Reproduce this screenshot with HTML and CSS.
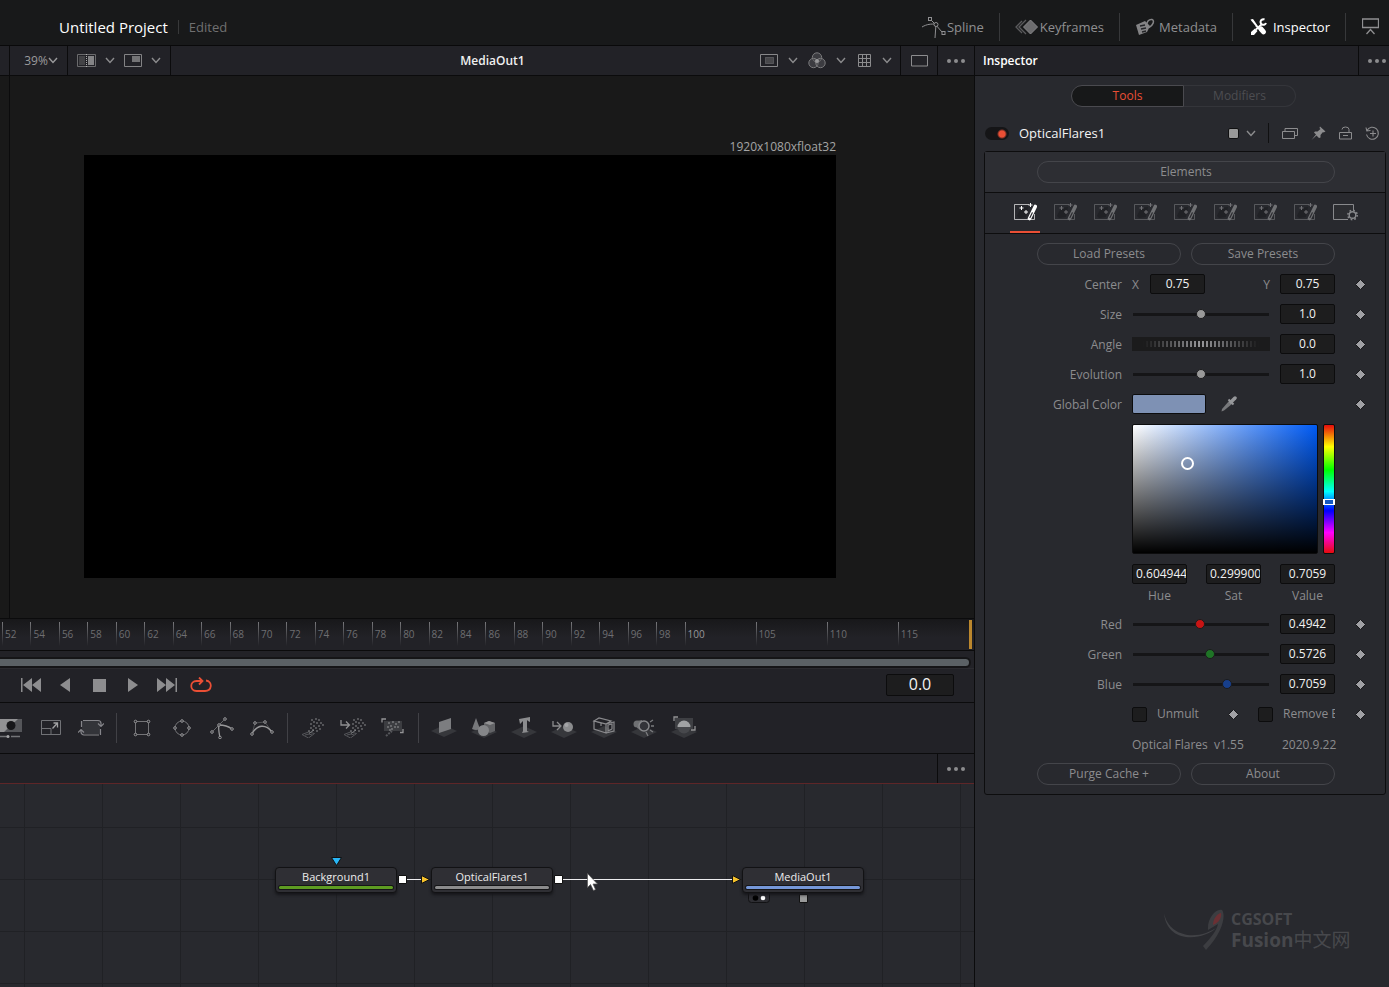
FILE: index.html
```html
<!DOCTYPE html>
<html lang="en">
<head>
<meta charset="utf-8">
<title>Untitled Project</title>
<link rel="stylesheet" href="styles.css">
</head>
<body>
<svg class="defs" aria-hidden="true">
  <symbol id="chev" viewBox="0 0 10 7"><path d="M1 1l4 4.500L9 1" fill="none" stroke="currentColor" stroke-width="1.400"/></symbol>
  <symbol id="dots" viewBox="0 0 18 4"><g fill="currentColor"><circle cx="2" cy="2" r="2"/><circle cx="9" cy="2" r="2"/><circle cx="16" cy="2" r="2"/></g></symbol>
  <symbol id="dia" viewBox="0 0 11 11"><path d="M5.500.500 10.500 5.500 5.500 10.500.500 5.500z" fill="#a0a0a4" stroke="#17171a" stroke-width="1"/></symbol>
  <symbol id="wand" viewBox="0 0 24 20">
    <path d="M16 2.500H1.500v15h20V12" fill="none" stroke="currentColor" stroke-width="1" opacity=".65"/>
    <path d="M4 14c2-6 6-9 11-9l-2 10-7 1z" fill="#202125"/>
    <path d="M8.500 4v4M6.500 6h4M13 8v4M11 10h4M17.500 1v4M15.500 3h4" stroke="currentColor" stroke-width="1"/>
    <path d="M22.300 4.500 16.500 16.500" stroke="currentColor" stroke-width="3.600" stroke-linecap="round"/>
    <path d="M19.300 10.800 17 15.500" stroke="#2b2b30" stroke-width="1.200" stroke-linecap="round"/>
  </symbol>
  <symbol id="plane" viewBox="0 0 28 14"><path d="M14 1 27 7 14 13 1 7z" fill="#36373b"/></symbol>
  <symbol id="spray" viewBox="0 0 22 20">
    <path d="M0 16.500 6.500 14l6 1.500L6.500 20zM3 17l4-1 3 1" fill="none" stroke="#55565a" stroke-width="1"/>
    <path d="M7 15.500 12 12" stroke="#77787b"/>
    <path d="M10 2v0M14 1v0M12 4v0M17 2v0M9 6v0M15 5v0M19 5v0M12 8v0M17 8v0M21 7v0M9 10v0M14 10v0M18 11v0M11 12v0M15 13v0M7 13v0" stroke="#999a9c" stroke-width="1.600" stroke-linecap="round"/>
  </symbol>
</svg>

<header class="topbar">
  <h1 class="project">Untitled Project</h1>
  <span class="edited">Edited</span>
  <nav class="topnav">
    <button class="nav">
      <svg width="25" height="22" viewBox="0 0 25 22"><g fill="none" stroke="currentColor"><path d="M0 11c5-3 9-3 14-3 0 5-1 9-1 14M9 4l4 4 7 8"/><rect x="6.500" y="1.500" width="3" height="3"/><circle cx="14" cy="8.500" r="2" fill="#18191a"/><rect x="20" y="15.500" width="3" height="3"/></g></svg><span>Spline</span></button>
    <button class="nav">
      <svg width="25" height="16" viewBox="0 0 25 16"><path d="M7 2 1 8l6 6M11 1 4 8l7 7" fill="none" stroke="#5b5b5d" stroke-width="1.300"/><path d="M15.500 1 22.500 8l-7 7-7-7z" fill="#6c6c6e" stroke="#89898b"/></svg><span>Keyframes</span></button>
    <button class="nav">
      <svg width="24" height="18" viewBox="0 0 24 18"><path d="M1 7 10 3l5 5-3 6-8 3z" fill="#848486"/><path d="M5 8l5-1M6 11l5-1M7 14l4-1" stroke="#242528" stroke-width="1.300"/><path d="M12 8c-1-4 2-7 5-6.500 3 1 1 6-3 8" fill="none" stroke="#848486" stroke-width="1.500"/></svg><span>Metadata</span></button>
    <button class="nav active">
      <svg width="23" height="18" viewBox="0 0 23 18"><path d="M.500 1.500 3 1l4.500 6.500-1.500 1L1.500 3zM1 17v-3l4-3.500 2.500 2.500L4 17z" fill="#fff"/><path d="M11 11l2.500 2.800" stroke="#fff" stroke-width="5" stroke-linecap="round"/><path d="M6 11.500 12 6M6 7.500l4 4" stroke="#fff" stroke-width="1.800"/><path d="M14.500 1.500a2.800 2.800 0 1 0 1.500 3.500" fill="none" stroke="#fff" stroke-width="2"/></svg><span>Inspector</span></button>
    <button class="nav last" aria-label="Display">
      <svg width="17" height="17" viewBox="0 0 17 17"><path d="M.500 1h16v8.500H.500zM4.500 16l4-4.500 4 4.500" fill="none" stroke="currentColor" stroke-width="1.300"/></svg></button>
  </nav>
</header>

<div class="workspace">
  <main class="main">
    <div class="viewbar">
      <div class="cell edge"></div>
      <button class="cell zoom">39%<svg width="10" height="7"><use href="#chev"/></svg></button>
      <div class="cell views">
        <button aria-label="Split view"><svg width="19" height="14" viewBox="0 0 19 14"><path d="M.500.500h18v12H.500z" fill="none" stroke="#6b6b6d"/><path d="M2 2h6v9H2z" fill="#434346"/><path d="M11 2h6v9h-6z" fill="#858587"/><path d="M9.500 0v14" stroke="#b0b0b0" stroke-dasharray="1 1"/></svg></button>
        <svg width="10" height="7"><use href="#chev"/></svg>
        <button aria-label="Sub view"><svg width="18" height="13" viewBox="0 0 18 13"><path d="M.500.500h17v12H.500z" fill="none" stroke="#838385"/><path d="M8 2h8v6H8z" fill="#747476"/></svg></button>
        <svg width="10" height="7"><use href="#chev"/></svg>
      </div>
      <h2 class="viewtitle">MediaOut1</h2>
      <div class="cell viewopts">
        <button aria-label="Region"><svg width="18" height="13" viewBox="0 0 18 13"><path d="M.500.500h17v12H.500z" fill="none" stroke="#88888a"/><path d="M5.500 3.500h8v6h-8z" fill="#48484b" stroke="#77777a" stroke-dasharray="1 1"/></svg></button>
        <svg width="10" height="7"><use href="#chev"/></svg>
        <button aria-label="Channels"><svg width="18" height="17" viewBox="0 0 18 17"><g fill="#55555888" stroke="#7b7b7d"><circle cx="9" cy="5.500" r="4.700"/><circle cx="5.500" cy="11" r="4.700"/><circle cx="12.500" cy="11" r="4.700"/></g><circle cx="9" cy="9" r="2" fill="#99999b"/></svg></button>
        <svg width="10" height="7"><use href="#chev"/></svg>
        <button aria-label="Grid"><svg width="13" height="13" viewBox="0 0 13 13"><path d="M.500.500h12v12H.500zM4.500 0v13M8.500 0v13M0 4.500h13M0 8.500h13" fill="none" stroke="#8b8b8d"/></svg></button>
        <svg width="10" height="7"><use href="#chev"/></svg>
      </div>
      <button class="cell single" aria-label="Single view"><svg width="17" height="12" viewBox="0 0 17 12"><path d="M.500.500h16v10.500H.500z" fill="none" stroke="currentColor"/></svg></button>
      <button class="cell more" aria-label="More"><svg width="18" height="4"><use href="#dots"/></svg></button>
    </div>

    <section class="viewer">
      <div class="stage">
        <p class="res">1920x1080xfloat32</p>
        <div class="frame"></div>
      </div>
    </section>

    <div class="ruler">
      <span>52</span><span>54</span><span>56</span><span>58</span><span>60</span><span>62</span><span>64</span><span>66</span><span>68</span><span>70</span><span>72</span><span>74</span><span>76</span><span>78</span><span>80</span><span>82</span><span>84</span><span>86</span><span>88</span><span>90</span><span>92</span><span>94</span><span>96</span><span>98</span><span class="five major">100</span><span class="five">105</span><span class="five">110</span><span class="five">115</span>
      <i class="endmark"></i>
    </div>
    <div class="range"><div class="rangebar"></div></div>

    <div class="transport">
      <button class="first" aria-label="First frame"><svg width="20" height="14" viewBox="0 0 20 14"><path d="M0 0h1.500v14H0zM11 0v14L2 7zM20 0v14l-9-7z"/></svg></button>
      <button class="rev" aria-label="Play reverse"><svg width="10" height="14" viewBox="0 0 10 14"><path d="M10 0v14L0 7z"/></svg></button>
      <button class="stop" aria-label="Stop"><svg width="13" height="13" viewBox="0 0 13 13"><path d="M0 0h13v13H0z"/></svg></button>
      <button class="play" aria-label="Play"><svg width="10" height="14" viewBox="0 0 10 14"><path d="M0 0v14l10-7z"/></svg></button>
      <button class="lastf" aria-label="Last frame"><svg width="20" height="14" viewBox="0 0 20 14"><path d="M18.500 0H20v14h-1.500zM9 0v14l9-7zM0 0v14l9-7z"/></svg></button>
      <button class="loop" aria-label="Loop"><svg width="22" height="16" viewBox="0 0 22 16"><path d="M16 3.500c7 1 6 10.500-1 10.500H6.500C-.500 14-.500 4 6.500 4H12M9 .500 12.500 4 9 7.500" fill="none" stroke="#ea4f35" stroke-width="1.800"/></svg></button>
      <input class="field time" type="text" value="0.0" aria-label="Current time">
    </div>

    <div class="tools">
      <button aria-label="Background"><svg width="22" height="20" viewBox="0 0 22 20"><path d="M0 1h22v13H0z" fill="#55565a"/><path d="M0 1h18L4 14H0z" fill="#929294"/><circle cx="11" cy="7.500" r="4.500" fill="#17171a"/><path d="M0 18.500h9M11 18.500h9" stroke="#737477" stroke-width="1.500"/><circle cx="8" cy="18.500" r="1.500" fill="#a5a5a7"/></svg></button>
      <button aria-label="Resize"><svg width="20" height="20" viewBox="0 0 20 20"><path d="M.500 2.500h19v14H.500zM.500 10.500H10v6H.500z" fill="none" stroke="#717276"/><path d="M11.500 10.500 16.500 5M12.500 5h4v4.500" fill="none" stroke="#a1a1a3" stroke-width="1.300"/></svg></button>
      <button aria-label="Transform"><svg width="26" height="20" viewBox="0 0 26 20"><path d="M4 3h18v13H4z" fill="#333439"/><path d="M5 2.500h15a3 3 0 0 1 3 3V8M20 5.500 23 8.500l3-3M21 17H6a3 3 0 0 1-3-3v-2M0 14.500l3-3 3 3M3.500 9V3M22.500 11v6" fill="none" stroke="#85858a" stroke-width="1.200"/></svg></button>
      <i class="sep"></i>
      <button aria-label="Rectangle mask"><svg width="18" height="18" viewBox="0 0 18 18"><g fill="#222227" stroke="#98989a"><path d="M2.500 2.500h13v13h-13z" stroke="#747477"/><circle cx="2.500" cy="2.500" r="1.300"/><circle cx="15.500" cy="2.500" r="1.300"/><circle cx="2.500" cy="15.500" r="1.300"/><circle cx="15.500" cy="15.500" r="1.300"/></g></svg></button>
      <button aria-label="Ellipse mask"><svg width="18" height="18" viewBox="0 0 18 18"><g fill="#222227" stroke="#98989a"><circle cx="9" cy="9" r="7" stroke="#747477"/><circle cx="9" cy="2" r="1.300"/><circle cx="16" cy="9" r="1.300"/><circle cx="2" cy="9" r="1.300"/><circle cx="9" cy="16" r="1.300"/></g></svg></button>
      <button aria-label="Polygon mask"><svg width="24" height="22" viewBox="0 0 24 22"><g fill="#222227" stroke="#98989a"><path d="M2 15 15 2" stroke="#66676a"/><path d="M10 21C9 15 8 11 9 8c5 0 9 1 13 4" fill="none" stroke-width="1.300"/><circle cx="15" cy="2" r="1.300"/><circle cx="2" cy="15" r="1.300"/><circle cx="9" cy="8" r="1.300"/><circle cx="22" cy="12" r="1.300"/><circle cx="10" cy="20.500" r="1.300"/></g></svg></button>
      <button aria-label="B-spline mask"><svg width="24" height="16" viewBox="0 0 24 16"><g fill="#222227" stroke="#98989a"><path d="M2 14 5 3l10-1 7 10" fill="none" stroke="#505154"/><path d="M2 14c5-10 14-10 20-2" fill="none" stroke-width="1.500"/><circle cx="2" cy="14" r="1.300"/><circle cx="5" cy="3" r="1.300"/><circle cx="15" cy="2" r="1.300"/><circle cx="22" cy="12" r="1.300"/></g></svg></button>
      <i class="sep"></i>
      <button aria-label="Particle emitter"><svg width="22" height="20"><use href="#spray"/></svg></button>
      <button aria-label="Particle merge"><svg width="26" height="20" viewBox="0 0 26 20"><path d="M1 2v5h8M6 3.500 9.500 7 6 10.500" fill="none" stroke="#8f8f91" stroke-width="1.300"/><use href="#spray" x="4" width="22" height="20"/></svg></button>
      <button aria-label="Particle render"><svg width="24" height="20" viewBox="0 0 24 20"><path d="M3 3h18v10H3z" fill="#3c3d41"/><path d="M1 4.500V1h4M19 14.500h3V11" fill="none" stroke="#949496" stroke-width="1.300"/><path d="M8 5v0M12 4v0M15 6v0M10 8v0M18 4v0M14 9v0M17 9v0M7 9v0M11 11v0M9 12v0" stroke="#a5a5a7" stroke-width="1.600" stroke-linecap="round"/><path d="M5 18 11 13" stroke="#55565a" stroke-dasharray="2 1" stroke-width="2"/></svg></button>
      <i class="sep"></i>
      <button aria-label="Image plane"><svg width="28" height="24" viewBox="0 0 28 24"><use href="#plane" y="8" width="28" height="14"/><path d="M9 6 21 2v11L9 17z" fill="#7c7d80"/></svg></button>
      <button aria-label="Shape 3D"><svg width="28" height="24" viewBox="0 0 28 24"><use href="#plane" y="9" width="28" height="14"/><path d="M6 2 2 13q4 2 8 0z" fill="#77787b"/><path d="m14 7 5-2 6 2v8l-5 2-6-3z" fill="#626366"/><path d="m14 7 5-2 6 2-5 2z" fill="#929294"/><circle cx="13.500" cy="14.500" r="5.500" fill="#858689"/></svg></button>
      <button aria-label="Text 3D"><svg width="28" height="24" viewBox="0 0 28 24"><use href="#plane" y="9" width="28" height="14"/><path d="m9 3 11-2v5l-2-1-1-1v11l2 1-7 1 1-2V5l-3 3z" fill="#8b8c8e"/></svg></button>
      <button aria-label="Merge 3D"><svg width="28" height="24" viewBox="0 0 28 24"><use href="#plane" y="9" width="28" height="14"/><path d="M3 5v5h8M7 6l4 4-4 4" fill="none" stroke="#8b8b8d" stroke-width="1.300"/><circle cx="18" cy="11" r="5" fill="#8b8c8e"/><circle cx="16.500" cy="9" r="2" fill="#a4a5a7"/></svg></button>
      <button aria-label="Camera 3D"><svg width="28" height="24" viewBox="0 0 28 24"><use href="#plane" y="9" width="28" height="14"/><path d="M4 5 9 2l12 3-5 3zM4 5v8l12 4V8zM16 8l8-2v9l-8 2M18 9l4-1v5l-4 2zM7 6l4 1v3" fill="none" stroke="#8a8a8d" stroke-width="1.200"/></svg></button>
      <button aria-label="Spot light"><svg width="28" height="24" viewBox="0 0 28 24"><use href="#plane" y="9" width="28" height="14"/><circle cx="7" cy="8" r="3.500" fill="#6f7073"/><path d="m7 5 5-1v11l-5-3z" fill="#6f7073"/><circle cx="14" cy="10" r="5" fill="#333439" stroke="#87888b" stroke-width="1.500"/><path d="m20 6 3-2M21 10h3M20 14l3 2M16 16l2 4" stroke="#7b7c7f" stroke-width="1.300"/></svg></button>
      <button aria-label="Renderer 3D"><svg width="28" height="24" viewBox="0 0 28 24"><use href="#plane" y="9" width="28" height="14"/><path d="M5 2h18v11H5z" fill="#3e3f43"/><path d="M4 5V1h4M21 14h4v-4" fill="none" stroke="#929294" stroke-width="1.300"/><circle cx="14" cy="11" r="6.500" fill="#47484c"/><path d="M7.500 11a6.500 6.500 0 0 1 13 0z" fill="#a1a2a4"/></svg></button>
    </div>

    <div class="flowbar"><button class="cell more" aria-label="Flow options"><svg width="18" height="4"><use href="#dots"/></svg></button></div>

    <section class="flow">
      <svg class="wires" width="900" height="140" viewBox="0 0 900 140">
        <path d="M405 95.500h18M561 95.500h174" stroke="#ededef" stroke-width="1"/>
        <path d="m421.500 91.500 8 4-8 4zM732.500 91.500l8 4-8 4z" fill="#f5c12b" stroke="#111"/>
        <path d="M398.500 91.500h8v8h-8zM554.500 91.500h8v8h-8z" fill="#fff" stroke="#111"/>
        <path d="M331.500 73.500h10l-5 8z" fill="#29b6f6" stroke="#111"/>
        <path d="M799.500 110.500h8v8h-8z" fill="#999a9a" stroke="#111"/>
        <rect x="748.500" y="106.500" width="21" height="12" rx="3" fill="#2e2e33" stroke="#121214"/>
        <circle cx="755.500" cy="114" r="2.800" fill="#000"/><circle cx="763" cy="114" r="2.300" fill="#fff"/>
      </svg>
      <div class="node n1">Background1</div>
      <div class="node n2">OpticalFlares1</div>
      <div class="node n3">MediaOut1</div>
      <svg class="cursor" width="12" height="19" viewBox="0 0 12 19"><path d="M.500.500v14l3-3 3 6 2-1-2.500-5.500h4.500z" fill="#fff" stroke="#555" stroke-width=".7"/></svg>
    </section>
  </main>

  <aside class="inspector">
    <div class="insphead"><h2>Inspector</h2><button class="cell dotsbtn" aria-label="Inspector options"><svg width="18" height="4"><use href="#dots"/></svg></button></div>

    <div class="segwrap"><div class="seg"><button class="on">Tools</button><button>Modifiers</button></div></div>

    <div class="toolhead">
      <label class="toggle"><input type="checkbox" checked aria-label="Enable OpticalFlares1"></label>
      <h3>OpticalFlares1</h3>
      <button class="chip" aria-label="Node color"></button>
      <svg class="chipchev" width="10" height="7"><use href="#chev"/></svg>
      <i class="vsep"></i>
      <button aria-label="Versions"><svg width="16" height="13" viewBox="0 0 16 13"><path d="M.500 4.500h12v7H.500zM3 4V1.500h12.500v7H13" fill="none" stroke="currentColor"/></svg></button>
      <button aria-label="Pin"><svg width="15" height="15" viewBox="0 0 15 15"><path d="m9 .500 5.500 5-2 1-.500-.500-2.500 3v2.500L8 12 5.500 9.500.500 14 5 8.500 3 6.500l1-1h2.500l3-2.500-1-1z" fill="currentColor"/></svg></button>
      <button aria-label="Lock"><svg width="13" height="14" viewBox="0 0 13 14"><path d="M.500 6.500h12v6.500H.500zM3 3.500a3.500 2.500 0 0 1 7 0v3M4 9.500h5" fill="none" stroke="currentColor"/></svg></button>
      <button aria-label="Reset"><svg width="15" height="15" viewBox="0 0 15 15"><path d="M2 4.500a6 6 0 1 1-.500 4M1 1.500l.800 3.500 3.700-.500M8 4.500v6M5 7.500h6" fill="none" stroke="currentColor" stroke-width="1.100"/></svg></button>
    </div>

    <section class="panel">
      <div class="elements"><button class="pill">Elements</button></div>
      <div class="tabs">
        <button class="on" aria-label="Controls 1"><svg width="24" height="20"><use href="#wand"/></svg></button>
        <button aria-label="Controls 2"><svg width="24" height="20"><use href="#wand"/></svg></button>
        <button aria-label="Controls 3"><svg width="24" height="20"><use href="#wand"/></svg></button>
        <button aria-label="Controls 4"><svg width="24" height="20"><use href="#wand"/></svg></button>
        <button aria-label="Controls 5"><svg width="24" height="20"><use href="#wand"/></svg></button>
        <button aria-label="Controls 6"><svg width="24" height="20"><use href="#wand"/></svg></button>
        <button aria-label="Controls 7"><svg width="24" height="20"><use href="#wand"/></svg></button>
        <button aria-label="Controls 8"><svg width="24" height="20"><use href="#wand"/></svg></button>
        <button aria-label="Settings"><svg width="25" height="17" viewBox="0 0 25 17"><path d="M20.500 6V.500H.500v15H15" fill="#2c2d31" stroke="#88898c"/><circle cx="19.500" cy="11" r="3.300" fill="#28292e" stroke="#88898c" stroke-width="1.400"/><circle cx="19.500" cy="11" r="4.700" fill="none" stroke="#88898c" stroke-width="1.500" stroke-dasharray="1.700 2"/></svg></button>
      </div>

      <div class="controls">
        <div class="pair"><button class="pill">Load Presets</button><button class="pill">Save Presets</button></div>

        <div class="row"><span class="lab">Center</span>
          <div class="xy"><label for="cx">X</label><input id="cx" class="field" type="text" value="0.75"><label class="y" for="cy">Y</label></div>
          <input id="cy" class="field" type="text" value="0.75"><button class="key" aria-label="Keyframe Center"><svg width="11" height="11"><use href="#dia"/></svg></button></div>
        <div class="row"><label class="lab" for="size">Size</label><input id="size" class="slider" type="range" min="0" max="2" step="0.01" value="1">
          <input class="field" type="text" value="1.0" aria-label="Size value"><button class="key" aria-label="Keyframe Size"><svg width="11" height="11"><use href="#dia"/></svg></button></div>
        <div class="row"><label class="lab" for="angle">Angle</label><div class="wheel"></div>
          <input id="angle" class="field" type="text" value="0.0"><button class="key" aria-label="Keyframe Angle"><svg width="11" height="11"><use href="#dia"/></svg></button></div>
        <div class="row"><label class="lab" for="evo">Evolution</label><input id="evo" class="slider" type="range" min="0" max="2" step="0.01" value="1">
          <input class="field" type="text" value="1.0" aria-label="Evolution value"><button class="key" aria-label="Keyframe Evolution"><svg width="11" height="11"><use href="#dia"/></svg></button></div>
        <div class="row"><span class="lab">Global Color</span>
          <div class="colorctl"><button class="color" aria-label="Global Color"></button><button aria-label="Pick color"><svg width="16" height="16" viewBox="0 0 16 16"><path d="m.500 15.500.500-2.500 7-8 3 3-8 6.500z" fill="#77787b"/><path d="m7.500 3.500 5 5" stroke="#96979a" stroke-width="2"/><path d="m10 6 4-4" stroke="#96979a" stroke-width="3.500" stroke-linecap="round"/></svg></button></div>
          <span></span><button class="key" aria-label="Keyframe Global Color"><svg width="11" height="11"><use href="#dia"/></svg></button></div>

        <div class="picker">
          <div class="sv"><i class="ring"></i></div>
          <div class="hue"><i class="huemark"></i></div>
        </div>
        <div class="hsv">
          <input id="h" class="field long" type="text" value="0.604944"><input id="s" class="field long" type="text" value="0.299900"><input id="v" class="field" type="text" value="0.7059">
          <label for="h">Hue</label><label for="s">Sat</label><label for="v">Value</label>
        </div>

        <div class="row"><label class="lab" for="r">Red</label><input id="r" class="slider red" type="range" min="0" max="1" step="0.0001" value="0.4942">
          <input class="field" type="text" value="0.4942" aria-label="Red value"><button class="key" aria-label="Keyframe Red"><svg width="11" height="11"><use href="#dia"/></svg></button></div>
        <div class="row"><label class="lab" for="g">Green</label><input id="g" class="slider green" type="range" min="0" max="1" step="0.0001" value="0.5726">
          <input class="field" type="text" value="0.5726" aria-label="Green value"><button class="key" aria-label="Keyframe Green"><svg width="11" height="11"><use href="#dia"/></svg></button></div>
        <div class="row"><label class="lab" for="b">Blue</label><input id="b" class="slider blue" type="range" min="0" max="1" step="0.0001" value="0.7059">
          <input class="field" type="text" value="0.7059" aria-label="Blue value"><button class="key" aria-label="Keyframe Blue"><svg width="11" height="11"><use href="#dia"/></svg></button></div>

        <div class="row">
          <div class="checks">
            <input id="um" class="box" type="checkbox"><label class="um" for="um">Unmult</label>
            <button aria-label="Keyframe Unmult"><svg width="11" height="11"><use href="#dia"/></svg></button>
            <input id="rb" class="box second" type="checkbox"><label class="rb" for="rb">Remove Black</label>
          </div>
          <button class="key" aria-label="Keyframe Remove"><svg width="11" height="11"><use href="#dia"/></svg></button></div>
        <div class="row"><div class="about"><span>Optical Flares&nbsp; v1.55</span><span>2020.9.22</span></div></div>

        <div class="pair bottom"><button class="pill">Purge Cache +</button><button class="pill">About</button></div>
      </div>
    </section>

    <div class="brand">
      <svg width="62" height="44" viewBox="0 0 62 44"><path d="M1 5c4 20 24 26 42 20 5-2 8-4 10-5-12 12-49 17-52-15z" fill="#414246"/><path d="M45 22C44 10 53 0 59 2c4 5 1 22-16 40l-3-4c8-8 14-16 15-22z" fill="#3c3d41"/><path d="M50 17c0-7 5-12 8-12 1 4-2 10-8 12z" fill="#6b3034"/></svg>
      <div class="brandtext"><strong>CGSOFT</strong><span><strong>Fusion</strong>中文网</span></div>
    </div>
  </aside>
</div>
</body>
</html>
```
FILE: styles.css
```css
* { box-sizing: border-box; }
body {
  margin: 0;
  min-height: 100vh;
  display: flex;
  flex-direction: column;
  background: #28292e;
  color: #8c8c8e;
  font: 12px/16px "Open Sans", "Noto Sans", sans-serif;
}
h1, h2, h3, p { margin: 0; font-weight: 400; }
button {
  padding: 0;
  border: 0;
  background: none;
  color: inherit;
  font: inherit;
  display: flex;
  align-items: center;
  justify-content: center;
}
svg { display: block; flex: none; }
.defs { position: absolute; width: 0; height: 0; }

/* Top bar */
.topbar {
  display: flex;
  align-items: center;
  height: 46px;
  padding: 8px 10px 0 59px;
  background: #18191a;
  border-bottom: 1px solid #09090a;
}
.project { font-size: 15px; font-weight: 500; line-height: 20px; color: #fff; }
.edited {
  margin-left: 10px;
  padding-left: 10px;
  border-left: 1px solid #38393a;
  font-size: 13px;
  line-height: 14px;
  color: #707071;
}
.topnav { display: flex; margin-left: auto; }
.nav {
  height: 28px;
  padding: 0 15px;
  border-right: 1px solid #37383a;
  font-size: 13px;
  color: #8f8f91;
}
.nav.active { padding-left: 17px; color: #fff; }
.nav.last { padding: 0 0 0 16px; border: 0; }

.workspace { flex: 1; display: grid; grid-template-columns: minmax(0, 1fr) 415px; }
.main { display: flex; flex-direction: column; background: #222227; min-width: 0; }

/* Viewer */
.viewbar { display: flex; height: 30px; border-bottom: 1px solid #0b0b0c; }
.cell { display: flex; align-items: center; border-right: 1px solid #0b0b0c; }
.edge { width: 10px; }
.zoom { width: 58px; color: #9b9b9d; padding-left: 5px; }
.views { width: 103px; gap: 9px; padding-left: 9px; justify-content: flex-start; }
.viewtitle {
  flex: 1;
  padding-left: 55px;
  text-align: center;
  font-size: 12px;
  font-weight: 600;
  line-height: 29px;
  color: #f0f0f0;
}
.viewopts { width: 142px; gap: 10px; padding-left: 1px; }
.viewopts button { min-width: 16px; }
.single { width: 37px; }
.more { width: 36px; border-right: 0; }
.viewer { flex: none; padding-left: 9px; background: #191919; }
.stage {
  padding: 63px 138px 40px 74px;
  border-left: 1px solid #0b0b0c;
}
.res { text-align: right; line-height: 16px; color: #a5a5a5; }
.frame { aspect-ratio: 16 / 9; background: #000; }

/* Timeline */
.ruler {
  display: flex;
  height: 33px;
  padding: 3px 2px 4px 2px;
  border-top: 1px solid #0b0b0c;
  border-bottom: 1px solid #0b0b0c;
  background: linear-gradient(#18181a, #222227 60%);
}
.ruler span {
  flex: 2 1 0;
  min-width: 0;
  background: linear-gradient(#77777a, #222227) left / 1px 100% no-repeat;
  text-indent: 3px;
  font-size: 10px;
  line-height: 25px;
  color: #6e6e71;
}
.ruler .five { flex-grow: 5; }
.ruler .major { color: #98989b; }
.endmark { width: 3px; margin: -2px 0 -3px; background: #bb872d; }
.range { padding: 6px 3px 0 0; border-bottom: 1px solid #2b2b30; }
.rangebar {
  height: 11px;
  border: solid #151517;
  border-width: 2px 2px 2px 0;
  border-radius: 0 6px 6px 0;
  background: #5b6165;
}
.transport {
  display: flex;
  align-items: center;
  height: 34px;
  padding: 0 20px 1px 21px;
  border-bottom: 1px solid #0b0b0c;
  fill: #8d8d8f;
}
.rev { margin-left: 19px; }
.stop { margin-left: 23px; }
.play { margin-left: 22px; }
.lastf { margin-left: 19px; }
.loop { margin-left: 13px; }
.field {
  width: 55px;
  height: 20px;
  padding: 0 0 2px;
  border: 1px solid #0c0c0d;
  border-radius: 2px;
  background: #1d1d1e;
  color: #f2f2f2;
  font: 12px/16px "Open Sans", "Noto Sans", sans-serif;
  text-align: center;
}
.time { width: 68px; height: 22px; margin-left: auto; font-size: 16px; }

/* Toolbar */
.tools {
  display: flex;
  align-items: center;
  height: 51px;
  padding-right: 20px;
  border-bottom: 1px solid #0b0b0c;
  overflow: hidden;
}
.tools button { width: 40px; flex: none; }
.tools button:first-child { width: 31px; padding-right: 9px; }
.sep { width: 1px; height: 30px; margin: 0 5px; background: #414146; }

/* Node flow */
.flowbar { display: flex; justify-content: flex-end; height: 30px; border-bottom: 1px solid #5e2628; }
.flowbar .more { width: 37px; border-left: 1px solid #0b0b0c; }
.flow {
  position: relative;
  flex: 1;
  min-height: 203px;
  overflow: hidden;
  background:
    linear-gradient(90deg, #202125 1px, transparent 1px) 24px 0 / 78px 52px,
    linear-gradient(#202125 1px, transparent 1px) 0 43px / 78px 52px,
    #28292e;
}
.wires { position: absolute; left: 0; top: 0; }
.node {
  position: absolute;
  top: 83px;
  width: 122px;
  height: 26px;
  padding: 1px 3px 0;
  border: 1px solid #121214;
  border-radius: 4px;
  background: #2f2f34;
  box-shadow: 0 2px 3px #16161a;
  text-align: center;
  font-size: 11px;
  color: #ececec;
}
.node::after { content: ""; display: block; height: 3px; margin-top: 1px; border-radius: 2px; background: #5e9c22; box-shadow: 0 0 0 1px #151517; }
.n1 { left: 275px; }
.n2 { left: 431px; }
.n2::after { background: #8b8b8c; }
.n3 { left: 742px; }
.n3::after { background: #7597d8; }
.cursor { position: absolute; left: 587px; top: 89px; }

/* Inspector */
.inspector { border-left: 1px solid #0b0b0c; background: #28292e; }
.insphead {
  display: flex;
  height: 30px;
  padding-left: 8px;
  border-bottom: 1px solid #0b0b0c;
  background: #222227;
}
.insphead h2 { flex: 1; font-size: 12px; font-weight: 600; line-height: 29px; color: #fff; }
.dotsbtn { width: 31px; padding-left: 9px; border-left: 1px solid #0b0b0c; border-right: 0; justify-content: flex-start; overflow: hidden; }
.segwrap { display: flex; justify-content: center; padding: 9px 0 0 3px; }
.seg { display: grid; grid-template-columns: 113px 112px; }
.seg button { height: 22px; border: 1px solid #34353a; border-left: 0; border-radius: 0 11px 11px 0; color: #4d4d51; }
.seg .on { border: 1px solid #4a4a4f; border-radius: 11px 0 0 11px; background: #171819; color: #ea4f35; }
.toolhead { display: flex; align-items: center; height: 43px; padding: 9px 9px 0 10px; }
.toggle { display: flex; width: 34px; }
.toggle input {
  appearance: none;
  width: 24px;
  height: 13px;
  margin: 0;
  border-radius: 7px;
  background: radial-gradient(circle at 17px 7px, #ea4f35 3px, transparent 5px) #151517;
}
.toolhead h3 { flex: 1; font-size: 13px; color: #f4f4f4; }
.chip { width: 11px; height: 11px; border: 1px solid #101011; border-radius: 2px; background: #999; }
.chipchev { margin: 0 12px 0 7px; }
.vsep { width: 1px; height: 20px; margin-right: 13px; background: #101011; }
.vsep ~ button + button { margin-left: 13px; }
.panel { margin: 1px 3px 0 9px; border: 1px solid #0d0d0e; border-radius: 3px; }
.pill { height: 22px; width: 100%; border: 1px solid #44454a; border-radius: 11px; }
.elements { padding: 9px 50px 9px 52px; border-bottom: 1px solid #0d0d0e; background: #2d2e33; }
.tabs { display: flex; justify-content: center; height: 41px; border-bottom: 1px solid #0d0d0e; color: #707174; }
.tabs button { width: 30px; margin: 0 5px; border-bottom: 2px solid transparent; }
.tabs .on { color: #fff; border-bottom-color: #ea4f35; }
.controls { padding: 9px; padding-left: 0; }
.pair { display: grid; grid-template-columns: 1fr 1fr; gap: 10px; margin: 0 41px 4px 52px; }
.pair.bottom { margin: 4px 41px 0 52px; }
.row { display: grid; grid-template-columns: 137px 138px 55px 1fr; column-gap: 10px; align-items: center; height: 30px; }
.lab { padding-top: 2px; text-align: right; }
.key { grid-column: 4; justify-self: center; }
.xy { display: flex; align-items: center; }
.xy label { width: 18px; padding-top: 2px; }
.xy .y { width: auto; margin-left: auto; }
.slider { appearance: none; width: 136px; height: 10px; margin: 0 1px; background: linear-gradient(#151517, #151517) center / 100% 3px no-repeat; }
.slider::-webkit-slider-thumb { appearance: none; width: 10px; height: 10px; border: 1px solid #1b1b1d; border-radius: 50%; background: #999; }
.red::-webkit-slider-thumb { background: #c81414; }
.green::-webkit-slider-thumb { background: #1f7426; }
.blue::-webkit-slider-thumb { background: #173f8c; }
.wheel {
  height: 14px;
  background:
    linear-gradient(#1b1b1c, #1b1b1c) top / 100% 4px no-repeat,
    linear-gradient(#1b1b1c, #1b1b1c) bottom / 100% 4px no-repeat,
    linear-gradient(90deg, #1b1b1c 8%, transparent 50%, #1b1b1c 92%),
    repeating-linear-gradient(90deg, #1b1b1c 0 2px, #97979a 2px 4px);
}
.colorctl { display: flex; align-items: center; gap: 15px; }
.color { width: 74px; height: 20px; border: 1px solid #0c0c0d; border-radius: 2px; background: #7e91b4; }
.picker { display: grid; grid-template-columns: 1fr 12px; gap: 5px; height: 130px; margin: 5px 41px 10px 147px; }
.sv, .hue { position: relative; border: 1px solid #0c0c0d; border-radius: 2px; }
.sv { background: linear-gradient(transparent, #000), linear-gradient(90deg, #fff, #005bf5); }
.hue { background: linear-gradient(#e60c0c, #ff0 17%, #0f0 35%, #0ff 52%, #00f 67%, #f0f 84%, #e60c0c); }
.ring { position: absolute; left: 48px; top: 32px; width: 13px; height: 13px; border: 2px solid #fff; border-radius: 50%; }
.huemark { position: absolute; left: -1px; right: -1px; top: 74px; height: 6px; border: solid #fff; border-width: 1px 2px; background: #1459c0; }
.hsv { display: grid; grid-template-columns: repeat(3, 55px); justify-content: space-between; row-gap: 4px; margin: 0 41px 5px 147px; text-align: center; }
.long { padding-left: 3px; text-align: left; }
.checks { grid-column: 2 / 4; display: flex; align-items: center; }
.box { appearance: none; flex: none; width: 15px; height: 15px; margin: 0 10px 0 0; border: 1px solid #0c0c0d; border-radius: 2px; background: #1d1d1e; }
.box.second { margin-left: 19px; }
.um { width: 71px; }
.rb { flex: 1; overflow: hidden; white-space: nowrap; }
.about { grid-column: 2 / 5; display: grid; grid-template-columns: 150px auto; justify-content: start; padding-top: 2px; white-space: nowrap; }
.brand { display: flex; gap: 6px; margin: 113px 0 0 188px; color: #47484c; }
.brandtext { display: flex; flex-direction: column; font-size: 19px; line-height: 20px; font-family: "Open Sans", "Noto Sans CJK SC", sans-serif; }
.brandtext > strong { font-size: 16px; line-height: 22px; }
```
